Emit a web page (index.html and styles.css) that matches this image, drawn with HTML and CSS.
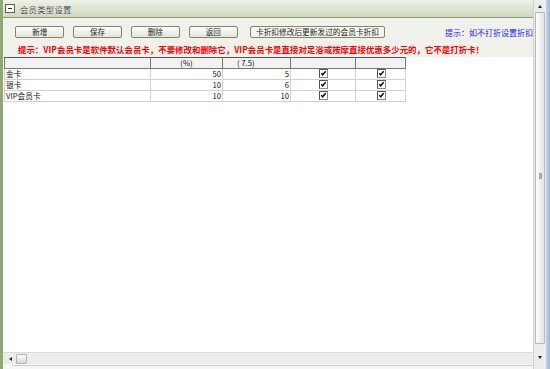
FILE: index.html
```html
<!DOCTYPE html>
<html lang="zh-CN">
<head>
    <meta charset="UTF-8">
    <title>会员类型设置</title>
    <link rel="stylesheet" href="styles.css">
</head>
<body>
    <div class="window">
        <div class="main">
            <!-- Title bar -->
            <div class="titlebar">
                <span class="tb-icon"></span>
                <span class="title">会员类型设置</span>
            </div>

            <!-- Toolbar -->
            <div class="toolbar">
                <div class="btn-row">
                    <button class="btn">新增</button>
                    <button class="btn">保存</button>
                    <button class="btn">删除</button>
                    <button class="btn">返回</button>
                    <button class="btn btn-long">卡折扣修改后更新发过的会员卡折扣</button>
                    <span class="hint-blue">提示：如不打折设置折扣</span>
                </div>
                <div class="hint-red">提示：VIP会员卡是软件默认会员卡，不要修改和删除它，VIP会员卡是直接对足浴或按摩直接优惠多少元的，它不是打折卡！</div>
            </div>

            <!-- Grid -->
            <div class="grid-area">
                <table class="grid">
                    <tr class="head">
                        <th class="c0"></th>
                        <th class="c1">(%)</th>
                        <th class="c2">( 7.5)</th>
                        <th class="c3"></th>
                        <th class="c4"></th>
                    </tr>
                    <tr>
                        <td class="c0">金卡</td>
                        <td class="c1 num">50</td>
                        <td class="c2 num">5</td>
                        <td class="c3"><span class="chk"><svg viewBox="0 0 8 8"><polyline points="1.5,3.5 3,5.5 6.5,1.5" /></svg></span></td>
                        <td class="c4"><span class="chk"><svg viewBox="0 0 8 8"><polyline points="1.5,3.5 3,5.5 6.5,1.5" /></svg></span></td>
                    </tr>
                    <tr>
                        <td class="c0">银卡</td>
                        <td class="c1 num">10</td>
                        <td class="c2 num">6</td>
                        <td class="c3"><span class="chk"><svg viewBox="0 0 8 8"><polyline points="1.5,3.5 3,5.5 6.5,1.5" /></svg></span></td>
                        <td class="c4"><span class="chk"><svg viewBox="0 0 8 8"><polyline points="1.5,3.5 3,5.5 6.5,1.5" /></svg></span></td>
                    </tr>
                    <tr>
                        <td class="c0">VIP会员卡</td>
                        <td class="c1 num">10</td>
                        <td class="c2 num">10</td>
                        <td class="c3"><span class="chk"><svg viewBox="0 0 8 8"><polyline points="1.5,3.5 3,5.5 6.5,1.5" /></svg></span></td>
                        <td class="c4"><span class="chk"><svg viewBox="0 0 8 8"><polyline points="1.5,3.5 3,5.5 6.5,1.5" /></svg></span></td>
                    </tr>
                </table>
            </div>

            <!-- Horizontal scrollbar -->
            <div class="hscroll">
                <span class="arrow-left"></span>
                <span class="hthumb"></span>
            </div>
            <div class="bottom-strip"><span class="strip-line"></span></div>
        </div>

        <!-- Vertical scrollbar -->
        <div class="vscroll">
            <div class="vtrack">
                <span class="arrow-up"></span>
                <span class="vthumb"><span class="grip"></span></span>
                <span class="arrow-down"></span>
            </div>
            <div class="vedge"></div>
        </div>
    </div>
</body>
</html>
```

FILE: styles.css
```css
/* Member type settings window */
html, body {
    margin: 0;
    padding: 0;
    width: 550px;
    height: 369px;
    overflow: hidden;
    background: #fff;
    font-family: "Noto Sans CJK SC", "Liberation Sans", sans-serif;
}
.window {
    display: flex;
    width: 550px;
    height: 369px;
}
.main {
    width: 530px;
    display: flex;
    flex-direction: column;
    border-left: 3px solid #93a774;
    background: #fff;
}

/* title bar */
.titlebar {
    height: 17px;
    display: flex;
    align-items: center;
    background: linear-gradient(#eef1e8, #cfd7c0);
    border-bottom: 1px solid #8c9a70;
}
.tb-icon {
    width: 8px;
    height: 7px;
    margin-left: 2px;
    border: 1px solid #5b6650;
    background: #fff;
    position: relative;
}
.tb-icon::after {
    content: "";
    position: absolute;
    left: 2px;
    top: 3px;
    width: 4px;
    height: 1px;
    background: #333;
}
.title {
    margin-left: 5px;
    font-size: 8.3px;
    color: #4a4a4a;
    text-shadow: 0 0 1px #fff;
    letter-spacing: 0.3px;
}

/* toolbar */
.toolbar {
    height: 39px;
    background: #f1f1ec;
    overflow: hidden;
}
.btn-row {
    display: flex;
    align-items: center;
    gap: 8.5px;
    padding: 8px 0 0 12px;
    white-space: nowrap;
}
.btn {
    width: 50px;
    height: 12px;
    padding: 0;
    font-family: inherit;
    font-size: 7.5px;
    line-height: 10px;
    color: #222;
    background: linear-gradient(#fdfdfb, #e4e6dc);
    border: 1px solid #7d8868;
    border-radius: 2px;
}
.btn-long {
    width: 136px;
    margin-left: 4px;
    font-size: 7.7px;
    background: linear-gradient(#fbfbf6, #f0f1e8);
}
.hint-blue {
    margin-left: 52px;
    font-size: 8px;
    color: #1a1aff;
}
.hint-red {
    margin: 6px 0 0 15px;
    font-size: 8.45px;
    line-height: 10px;
    font-weight: bold;
    color: #f00;
    white-space: nowrap;
}

/* grid */
.grid-area {
    flex: 1;
    padding-left: 1px;
}
.grid {
    border-collapse: collapse;
    table-layout: fixed;
    font-size: 7.7px;
    color: #111;
}
.grid td, .grid th {
    height: 10px;
    padding: 0 1px;
    line-height: 10px;
    border: 1px solid #d2d2d2;
    white-space: nowrap;
    overflow: hidden;
}
.grid .head th {
    font-weight: normal;
    background: #f2f2f2;
    border: 1px solid #777;
    border-top-color: #555;
}
.c0 { width: 143px; text-align: left; }
.c1 { width: 69px; text-align: center; }
.c2 { width: 65px; }
.head .c2 { text-align: left; padding-left: 14px; width: 52px; }
.c3 { width: 62px; }
.c4 { width: 47px; }
.num { text-align: right; }
td.c3 { padding-left: 28px; width: 35px; }
td.c4 { padding-left: 21px; width: 27px; }
.chk {
    display: inline-block;
    width: 7px;
    height: 7px;
    vertical-align: -1px;
    background: #fff;
    border: 1px solid #8a8a8a;
    border-top-color: #555;
    border-left-color: #555;
}
.chk svg {
    display: block;
    width: 7px;
    height: 7px;
}
.chk polyline {
    fill: none;
    stroke: #000;
    stroke-width: 1.6;
}

/* horizontal scrollbar */
.hscroll {
    height: 11px;
    display: flex;
    align-items: center;
    background: #ececec;
    border-top: 1px solid #dcdcdc;
}
.arrow-left {
    margin-left: 6px;
    width: 0;
    height: 0;
    border-top: 2px solid transparent;
    border-bottom: 2px solid transparent;
    border-right: 3px solid #222;
}
.hthumb {
    margin-left: 4px;
    width: 9px;
    height: 8px;
    border: 1px solid #b2b2b2;
    border-radius: 1px;
    background: linear-gradient(#fafafa, #d9d9d9);
}
.bottom-strip {
    height: 4px;
    background: #f6f6f6;
    padding: 1px 0 0 9px;
}
.strip-line {
    display: block;
    height: 1px;
    background: #cfcfcf;
}

/* vertical scrollbar */
.vscroll {
    width: 17px;
    display: flex;
    background: #ececec;
}
.vtrack {
    width: 12px;
    display: flex;
    flex-direction: column;
    align-items: center;
    border-left: 1px solid #d0d0d0;
}
.arrow-up, .arrow-down {
    width: 0;
    height: 0;
    border-left: 2px solid transparent;
    border-right: 2px solid transparent;
}
.arrow-up {
    margin-top: 5px;
    border-bottom: 3px solid #222;
}
.arrow-down {
    margin-top: 12px;
    border-top: 3px solid #222;
}
.vthumb {
    margin-top: 4px;
    width: 8px;
    height: 330px;
    border: 1px solid #b8b8b8;
    border-radius: 1px;
    background: linear-gradient(90deg, #fbfbfb, #e3e3e3);
    display: flex;
    justify-content: center;
}
.grip {
    margin-top: 160px;
    width: 3px;
    height: 6px;
    background: #a8a8a8;
}
.vedge {
    width: 4px;
    background: linear-gradient(90deg, #c4d3e6, #9cb6d8);
}
```
